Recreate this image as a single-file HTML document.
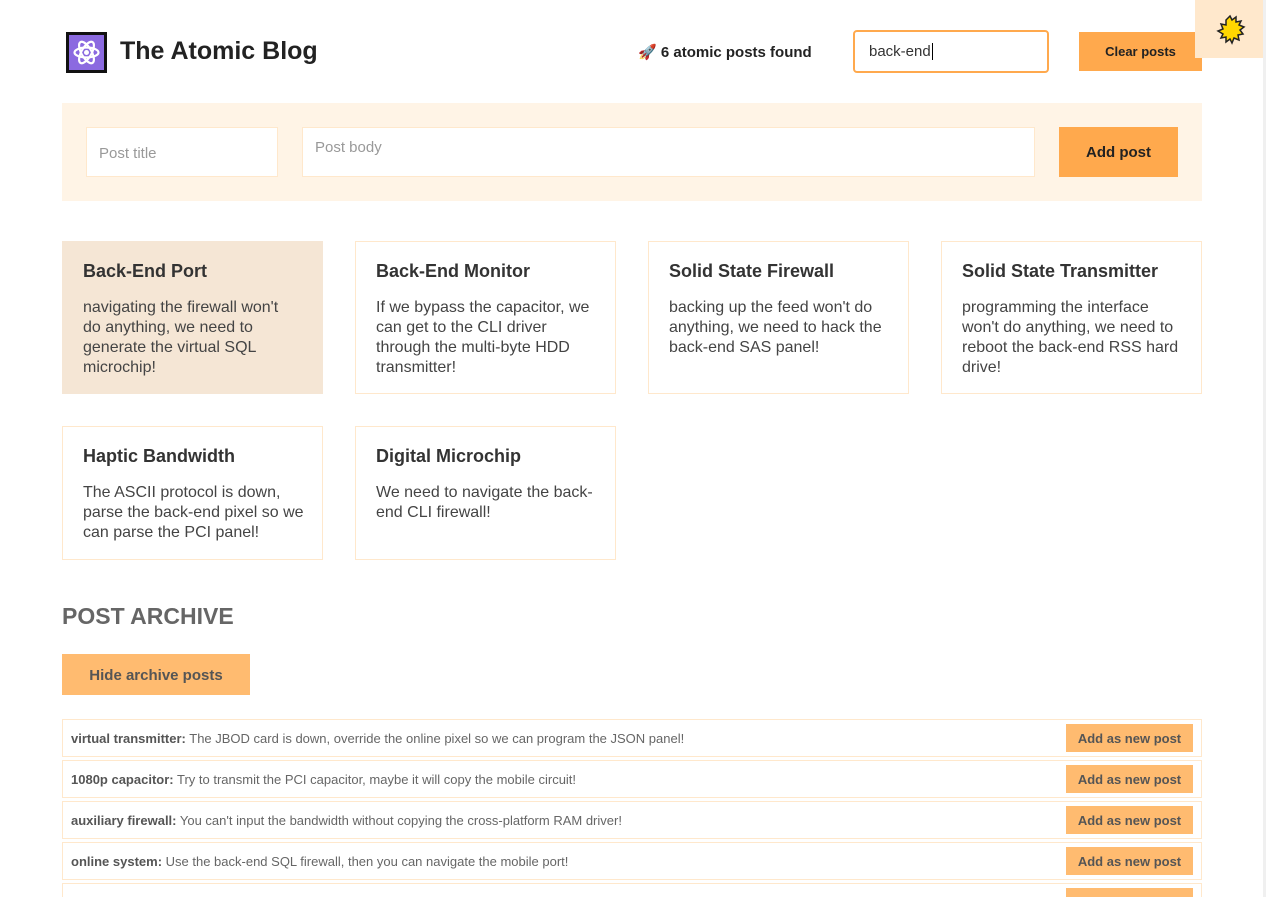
<!DOCTYPE html>
<html><head><meta charset="utf-8"><style>
*{box-sizing:border-box;margin:0;padding:0}
html,body{width:1266px;height:897px;overflow:hidden}
body{background:#fff;font-family:"Liberation Sans",sans-serif;color:#343a40;position:relative}
.abs{position:absolute}
.title{left:120px;top:37px;font-size:25px;font-weight:bold;color:#222}
.logo{left:66px;top:32px;width:41px;height:41px;background:#8b6ae0;border:3px solid #111}
.found{left:638px;top:43px;font-size:15px;font-weight:bold;color:#222}
.search{left:853px;top:30px;width:196px;height:43px;border:2px solid #ffa94d;border-radius:4px;padding:11px 14px;font-size:15px;color:#333}
.clear{left:1079px;top:32px;width:123px;height:39px;background:#ffa94d;font-size:13px;font-weight:bold;color:#222;text-align:center;line-height:39px}
.sun{left:1195px;top:0;width:71px;height:58px;background:#ffe8cc}
.form{left:62px;top:103px;width:1140px;height:98px;background:#fff4e6}
.inp{background:#fff;border:1px solid #ffe8cc;font-size:15px;color:#999;padding:0 12px}
.add{left:1059px;top:127px;width:119px;height:50px;background:#ffa94d;font-size:15px;font-weight:bold;color:#222;text-align:center;line-height:52px}
.card{position:absolute;width:261px;border:1px solid #ffe8cc;padding:19px 20px}
.card h3{font-size:18px;color:#333;margin-bottom:16px}
.card p{font-size:16px;line-height:20px;color:#444;width:222px}
.arch{left:62px;top:603px;font-size:23px;font-weight:bold;color:#666}
.hide{left:62px;top:654px;width:188px;height:41px;background:#ffbb70;font-size:15px;font-weight:bold;color:#555;text-align:center;line-height:43px}
.row{position:absolute;left:62px;width:1140px;height:38px;border:1px solid #ffe8cc;font-size:13px;color:#666;padding:0 8px;line-height:37px}
.row b{color:#555}
.row span{position:absolute;right:8px;top:4px;width:127px;height:28px;background:#ffbb70;color:#555;font-weight:bold;text-align:center;line-height:29px;font-size:13px}
</style></head><body>
<div class="abs logo"><svg width="35" height="35" viewBox="0 0 35 35"><g fill="none" stroke="#fff" stroke-width="2.2"><ellipse cx="17.5" cy="17.5" rx="12" ry="5"/><ellipse cx="17.5" cy="17.5" rx="12" ry="5" transform="rotate(60 17.5 17.5)"/><ellipse cx="17.5" cy="17.5" rx="12" ry="5" transform="rotate(120 17.5 17.5)"/></g><circle cx="17.5" cy="17.5" r="2.5" fill="#fff"/></svg></div>
<div class="abs title">The Atomic Blog</div>
<div class="abs found"><span style="font-size:15px">🚀</span> 6 atomic posts found</div>
<div class="abs search">back-end<span style="border-left:1px solid #000;margin-left:1px"></span></div>
<div class="abs clear">Clear posts</div>
<div class="abs sun"><svg width="71" height="58" viewBox="0 0 71 58"><polygon points="33,16 35,20 39,17 39,22 44,21 42,25 47,27 43,30 46,34 41,35 42,40 37,38 35,43 33,39 29,42 29,37 24,38 26,34 21,31 26,29 24,24 29,25 29,20" transform="translate(2,0)" fill="#ffd700" stroke="#222" stroke-width="1.5"/></svg></div>
<div style="position:absolute;left:1263px;top:0;width:3px;height:897px;background:#f0f0f0"></div>
<div class="abs form"></div>
<div class="abs inp" style="left:86px;top:127px;width:192px;height:50px;line-height:52px">Post title</div>
<div class="abs inp" style="left:302px;top:127px;width:733px;height:50px;padding-top:11px">Post body</div>
<div class="abs add">Add post</div>

<div class="card" style="left:62px;top:241px;height:153px;background:#f5e6d5;border-color:#f5e6d5"><h3>Back-End Port</h3><p style="width:212px">navigating the firewall won't do anything, we need to generate the virtual SQL microchip!</p></div>
<div class="card" style="left:355px;top:241px;height:153px"><h3>Back-End Monitor</h3><p>If we bypass the capacitor, we can get to the CLI driver through the multi-byte HDD transmitter!</p></div>
<div class="card" style="left:648px;top:241px;height:153px"><h3>Solid State Firewall</h3><p>backing up the feed won't do anything, we need to hack the back-end SAS panel!</p></div>
<div class="card" style="left:941px;top:241px;height:153px"><h3>Solid State Transmitter</h3><p>programming the interface won't do anything, we need to reboot the back-end RSS hard drive!</p></div>
<div class="card" style="left:62px;top:426px;height:134px"><h3>Haptic Bandwidth</h3><p>The ASCII protocol is down, parse the back-end pixel so we can parse the PCI panel!</p></div>
<div class="card" style="left:355px;top:426px;height:134px"><h3>Digital Microchip</h3><p>We need to navigate the back-end CLI firewall!</p></div>

<div class="abs arch">POST ARCHIVE</div>
<div class="abs hide">Hide archive posts</div>
<div class="row" style="top:719px"><b>virtual transmitter:</b> The JBOD card is down, override the online pixel so we can program the JSON panel!<span>Add as new post</span></div>
<div class="row" style="top:760px"><b>1080p capacitor:</b> Try to transmit the PCI capacitor, maybe it will copy the mobile circuit!<span>Add as new post</span></div>
<div class="row" style="top:801px"><b>auxiliary firewall:</b> You can't input the bandwidth without copying the cross-platform RAM driver!<span>Add as new post</span></div>
<div class="row" style="top:842px"><b>online system:</b> Use the back-end SQL firewall, then you can navigate the mobile port!<span>Add as new post</span></div>
<div class="row" style="top:883px;height:14px;border-bottom:none"><span style="height:10px"></span></div>
</body></html>
